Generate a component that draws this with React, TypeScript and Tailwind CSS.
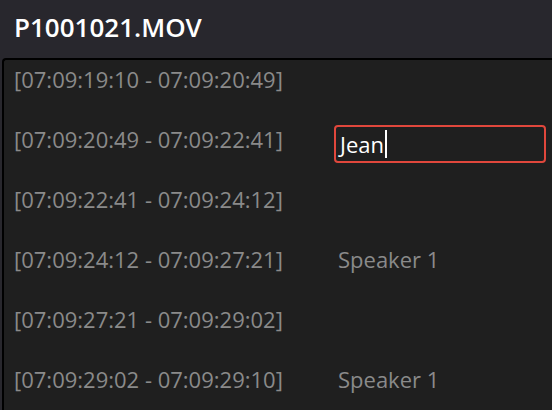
import React from 'react';

const rows = [
  { time: '[07:09:19:10 - 07:09:20:49]', speaker: '' },
  { time: '[07:09:20:49 - 07:09:22:41]', speaker: 'edit' },
  { time: '[07:09:22:41 - 07:09:24:12]', speaker: '' },
  { time: '[07:09:24:12 - 07:09:27:21]', speaker: 'Speaker 1' },
  { time: '[07:09:27:21 - 07:09:29:02]', speaker: '' },
  { time: '[07:09:29:02 - 07:09:29:10]', speaker: 'Speaker 1' },
];

const App = () => {
  return (
    <div
      className="w-[552px] h-[410px] overflow-hidden bg-[#28272d] flex flex-col"
      style={{ fontFamily: '"Open Sans", "Noto Sans", sans-serif' }}
    >
      {/* Header */}
      <div className="h-[58px] shrink-0 flex items-center px-[14px] pb-[5px]">
        <h1 className="text-[26px] font-semibold text-white leading-none">P1001021.MOV</h1>
      </div>

      {/* Subtitle list */}
      <div className="flex-1 ml-[2px] bg-[#1f1f1f] border-l-2 border-t-2 border-black rounded-tl-[4px] overflow-hidden">
        {rows.map((row, i) => (
          <div key={i} className="h-[60px] flex items-start pt-[4px] pl-[10px]">
            <span className="w-[320px] shrink-0 text-[22px] leading-[30px] text-[#8a8a8a]">{row.time}</span>
            {row.speaker === 'edit' ? (
              <div className="mt-[1px] w-[212px] h-[38px] border-2 border-[#e0473c] rounded-[4px] flex items-center px-[4px]">
                <span className="text-[22px] text-white leading-none">Jean</span>
                <span className="w-[2px] h-[28px] bg-white ml-[1px]" />
              </div>
            ) : (
              <span className="pl-[4px] text-[22px] leading-[30px] text-[#8a8a8a]">{row.speaker}</span>
            )}
          </div>
        ))}
      </div>
    </div>
  );
};

export default App;
